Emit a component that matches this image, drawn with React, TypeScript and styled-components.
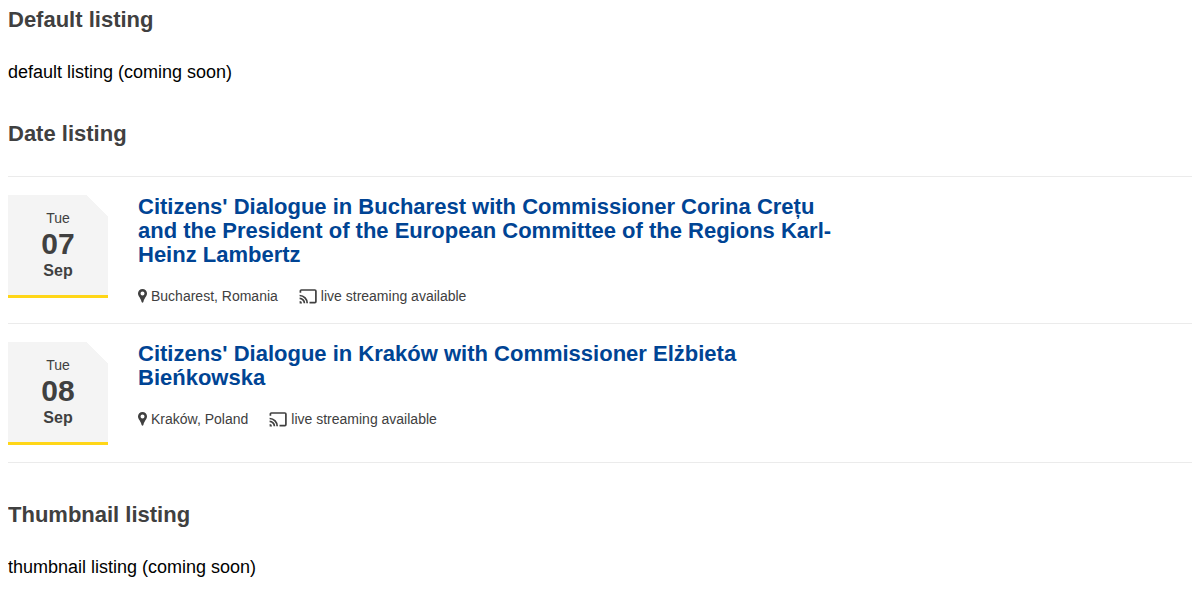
import React from "react";
import styled, { createGlobalStyle } from "styled-components";

const GlobalStyle = createGlobalStyle`
  body {
    margin: 0 8px;
    background: #fff;
    color: #000;
    font: 18px/24px "Liberation Sans", Arial, sans-serif;
  }
`;

const SectionTitle = styled.h2`
  margin: 0;
  color: #404040;
  font-size: 22px;
  line-height: 24px;
`;

const Section = styled.section`
  padding: 8px 0 30px;
`;

const Note = styled.p`
  margin: 28px 0 0;
`;

const Listing = styled.ul`
  list-style: none;
  margin: 30px 0 2px;
  padding: 0;
`;

const Item = styled.li`
  display: flex;
  align-items: flex-start;
  gap: 30px;
  padding: 18px 0 17px;
  border-top: 1px solid #ebebeb;
  &:last-child {
    border-bottom: 1px solid #ebebeb;
  }
`;

const DateBlock = styled.time`
  display: flex;
  flex-direction: column;
  align-items: center;
  box-sizing: border-box;
  flex: 0 0 100px;
  height: 103px;
  padding-top: 14px;
  border-bottom: 3px solid #ffd617;
  background: linear-gradient(225deg, #fff 15px, #f4f4f4 15px);
  color: #404040;
`;

const Weekday = styled.span`
  font-size: 14px;
  line-height: 18px;
`;

const Day = styled.span`
  font-size: 30px;
  line-height: 34px;
  font-weight: bold;
`;

const Month = styled.span`
  font-size: 16px;
  line-height: 20px;
  font-weight: bold;
`;

const Body = styled.div`
  flex: 0 1 700px;
`;

const Title = styled.h3`
  margin: 0;
  font-size: 22px;
  line-height: 24px;
`;

const TitleLink = styled.a`
  color: #004494;
  text-decoration: none;
`;

const Meta = styled.div`
  display: flex;
  gap: 21px;
  margin-top: 20px;
  color: #404040;
  font-size: 14px;
  line-height: 19px;
`;

const MetaItem = styled.span`
  display: flex;
  align-items: center;
  gap: 4px;
`;

const PinIcon = () => (
  <svg width="9" height="15" viewBox="0 0 9 15" aria-hidden="true">
    <path
      fill="#404040"
      fillRule="evenodd"
      d="M4.5 0A4.500 4.500 0 0 0 0 4.600C0 7.200 3 9.500 3.600 13Q4.500 14.300 5.400 13C6 9.500 9 7.200 9 4.600A4.500 4.500 0 0 0 4.500 0ZM4.500 2.500a2 2 0 1 1 0 4 2 2 0 0 1 0-4Z"
    />
  </svg>
);

const CastIcon = () => (
  <svg width="18" height="15" viewBox="0 0 18 15" fill="none" stroke="#404040" strokeWidth="1.7" aria-hidden="true">
    <path d="M1.400 3.800V2Q1.400 1 2.400 1H15.900Q16.900 1 16.900 2V12.600Q16.900 13.600 15.900 13.600H10.500" />
    <path d="M.6 6.500a7.600 7.600 0 0 1 7.600 7.800M.6 9.400a4.800 4.800 0 0 1 4.800 4.900" />
    <path d="M.6 12a2.400 2.400 0 0 1 2.400 2.400H.6Z" fill="#404040" stroke="none" />
  </svg>
);

const events = [
  {
    date: "09-07",
    day: "07",
    title:
      "Citizens' Dialogue in Bucharest with Commissioner Corina Crețu and the President of the European Committee of the Regions Karl-Heinz Lambertz",
    place: "Bucharest, Romania",
  },
  {
    date: "09-08",
    day: "08",
    title: "Citizens' Dialogue in Kraków with Commissioner Elżbieta Bieńkowska",
    place: "Kraków, Poland",
  },
];

export default function App() {
  return (
    <main>
      <GlobalStyle />
      <Section>
        <SectionTitle>Default listing</SectionTitle>
        <Note>default listing (coming soon)</Note>
      </Section>
      <Section>
        <SectionTitle>Date listing</SectionTitle>
        <Listing>
          {events.map((event) => (
            <Item key={event.date}>
              <DateBlock dateTime={event.date}>
                <Weekday>Tue</Weekday>
                <Day>{event.day}</Day>
                <Month>Sep</Month>
              </DateBlock>
              <Body>
                <Title>
                  <TitleLink href="#">{event.title}</TitleLink>
                </Title>
                <Meta>
                  <MetaItem>
                    <PinIcon />
                    {event.place}
                  </MetaItem>
                  <MetaItem>
                    <CastIcon />
                    live streaming available
                  </MetaItem>
                </Meta>
              </Body>
            </Item>
          ))}
        </Listing>
      </Section>
      <Section>
        <SectionTitle>Thumbnail listing</SectionTitle>
        <Note>thumbnail listing (coming soon)</Note>
      </Section>
    </main>
  );
}
